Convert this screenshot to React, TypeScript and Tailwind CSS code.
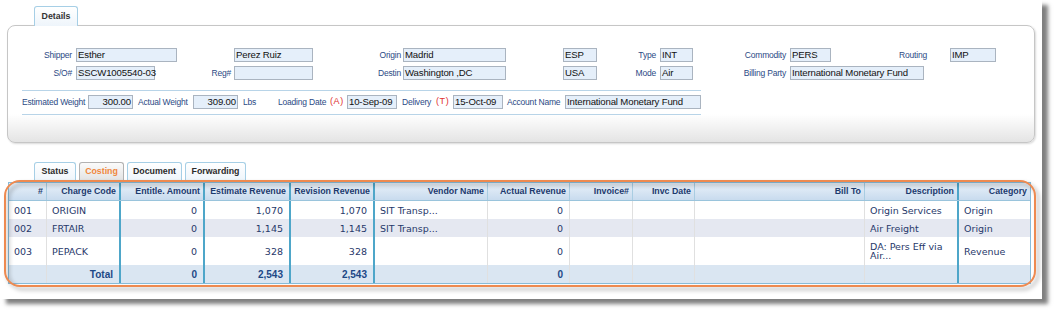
import React from 'react';

type Sep = 'none' | 'thin' | 'thick';

interface ICol {
  title: string;
  w: string;
  sep: Sep;
  align: 'left' | 'right';
}

const cols: ICol[] = [
  { title: '#', w: 'w-[37px]', sep: 'none', align: 'left' },
  { title: 'Charge Code', w: 'w-[73px]', sep: 'thin', align: 'left' },
  { title: 'Entitle. Amount', w: 'w-[84px]', sep: 'thick', align: 'right' },
  { title: 'Estimate Revenue', w: 'w-[86px]', sep: 'thick', align: 'right' },
  { title: 'Revision Revenue', w: 'w-[84px]', sep: 'thick', align: 'right' },
  { title: 'Vendor Name', w: 'w-[114px]', sep: 'thick', align: 'left' },
  { title: 'Actual Revenue', w: 'w-[82px]', sep: 'thin', align: 'right' },
  { title: 'Invoice#', w: 'w-[63px]', sep: 'thin', align: 'left' },
  { title: 'Invc Date', w: 'w-[62px]', sep: 'thin', align: 'left' },
  { title: 'Bill To', w: 'w-[170px]', sep: 'thin', align: 'left' },
  { title: 'Description', w: 'w-[93px]', sep: 'thin', align: 'left' },
  { title: 'Category', w: 'w-[73px]', sep: 'thick', align: 'left' },
];

const rows: string[][] = [
  ['001', 'ORIGIN', '0', '1,070', '1,070', 'SIT Transp...', '0', '', '', '', 'Origin Services', 'Origin'],
  ['002', 'FRTAIR', '0', '1,145', '1,145', 'SIT Transp...', '0', '', '', '', 'Air Freight', 'Origin'],
  ['003', 'PEPACK', '0', '328', '328', '', '0', '', '', '', 'DA: Pers Eff via Air...', 'Revenue'],
];

const totals = ['', 'Total', '0', '2,543', '2,543', '', '0', '', '', '', '', ''];

const rowStyles = [
  'h-[18px] bg-white',
  'h-[18px] bg-[#e5e8f1]',
  'h-[28px] bg-white',
];

const headSep = (s: Sep) =>
  s === 'thick'
    ? 'border-l-2 border-[#4ea6c9]'
    : s === 'thin'
      ? 'border-l border-[#a9cde2]'
      : '';

const bodySep = (s: Sep) =>
  s === 'thick'
    ? 'border-l-2 border-[#4ea6c9]'
    : s === 'thin'
      ? 'border-l border-[#e0e0e0]'
      : '';

const Label = ({ children, className = '' }: { children?: React.ReactNode; className?: string }) => (
  <span className={`text-[8.5px] tracking-[-0.2px] text-[#2b4a85] whitespace-nowrap ${className}`}>
    {children}
  </span>
);

const Field = ({ value = '', w, right = false }: { value?: string; w: string; right?: boolean }) => (
  <div
    className={`${w} h-[14px] shrink-0 border border-[#aab4c0] bg-[#e5effa] px-[1px] text-[9.6px] tracking-[-0.15px] leading-[12px] text-[#111] whitespace-nowrap ${
      right ? 'text-right' : ''
    }`}
  >
    {value}
  </div>
);

const Cell = ({ children, className = '' }: { children?: React.ReactNode; className?: string }) => (
  <div className={`flex h-[14px] items-center ${className}`}>{children}</div>
);

const tabs = [
  { name: 'Status', w: 'w-[42px]', active: false },
  { name: 'Costing', w: 'w-[45px]', active: true },
  { name: 'Document', w: 'w-[55px]', active: false },
  { name: 'Forwarding', w: 'w-[61px]', active: false },
];

const App = () => {
  return (
    <div className="h-[311px] w-[1055px] bg-white font-['Liberation_Sans',sans-serif]">
      <div className="flex h-[299px] w-[1042px] flex-col bg-white shadow-[6px_5px_4px_rgba(0,0,0,0.5)]">
        {/* details tab */}
        <div className="pl-[34px] pt-[6px]">
          <div className="relative z-10 -mb-px flex h-[20px] w-[44px] items-center justify-center rounded-t-[3px] border border-b-0 border-[#a6cfe6] bg-linear-to-b from-white to-[#eef5fb] text-[8.8px] font-bold text-[#333]">
            Details
          </div>
        </div>

        {/* details panel */}
        <div className="ml-[7px] h-[118px] w-[1028px] rounded-[8px] border border-[#c6c6c6] bg-linear-to-b from-white from-[76%] to-[#e4e4e4] pt-[22px] shadow-[1px_1px_2px_rgba(0,0,0,0.15)]">
          <div className="grid grid-cols-[68px_101px_57px_79px_90px_103px_57px_34px_63px_33px_97px_160px_46px] gap-y-[4px]">
            <Cell className="justify-end pr-[4px]"><Label>Shipper</Label></Cell>
            <Cell><Field w="w-[101px]" value="Esther" /></Cell>
            <Cell />
            <Cell><Field w="w-[79px]" value="Perez Ruiz" /></Cell>
            <Cell className="justify-end pr-[2px]"><Label>Origin</Label></Cell>
            <Cell><Field w="w-[103px]" value="Madrid" /></Cell>
            <Cell />
            <Cell><Field w="w-[34px]" value="ESP" /></Cell>
            <Cell className="justify-end pr-[4px]"><Label>Type</Label></Cell>
            <Cell><Field w="w-[33px]" value="INT" /></Cell>
            <Cell className="justify-end pr-[4px]"><Label>Commodity</Label></Cell>
            <Cell>
              <Field w="w-[41px]" value="PERS" />
              <Label className="ml-auto pr-[23px]">Routing</Label>
            </Cell>
            <Cell><Field w="w-[46px]" value="IMP" /></Cell>

            <Cell className="justify-end pr-[4px]"><Label>S/O#</Label></Cell>
            <Cell><Field w="w-[79px]" value="SSCW1005540-03" /></Cell>
            <Cell className="justify-end pr-[3px]"><Label>Reg#</Label></Cell>
            <Cell><Field w="w-[79px]" /></Cell>
            <Cell className="justify-end pr-[2px]"><Label>Destin</Label></Cell>
            <Cell><Field w="w-[103px]" value="Washington ,DC" /></Cell>
            <Cell />
            <Cell><Field w="w-[34px]" value="USA" /></Cell>
            <Cell className="justify-end pr-[4px]"><Label>Mode</Label></Cell>
            <Cell><Field w="w-[33px]" value="Air" /></Cell>
            <Cell className="justify-end pr-[4px]"><Label>Billing Party</Label></Cell>
            <Cell><Field w="w-[134px]" value="International Monetary Fund" /></Cell>
            <Cell />
          </div>

          <div className="ml-[14px] mt-[10px] h-px w-[679px] bg-[#b8d4e8]" />
          <div className="ml-[14px] mt-[4px] flex h-[14px] items-center">
            <Label className="w-[66px]">Estimated Weight</Label>
            <Field w="w-[45px]" value="300.00" right />
            <Label className="w-[60px] pl-[5px]">Actual Weight</Label>
            <Field w="w-[45px]" value="309.00" right />
            <Label className="w-[40px] pl-[5px]">Lbs</Label>
            <Label className="w-[52px]">Loading Date</Label>
            <span className="w-[17px] text-[9px] tracking-[0.6px] text-[#e03030]">(A)</span>
            <Field w="w-[50px]" value="10-Sep-09" />
            <Label className="w-[39px] pl-[5px]">Delivery</Label>
            <span className="w-[17px] text-[9px] tracking-[0.6px] text-[#e03030]">(T)</span>
            <Field w="w-[50px]" value="15-Oct-09" />
            <Label className="w-[62px] pl-[4px]">Account Name</Label>
            <Field w="w-[136px]" value="International Monetary Fund" />
          </div>
          <div className="ml-[14px] mt-[5px] h-px w-[679px] bg-[#b8d4e8]" />
        </div>

        {/* costing tabs */}
        <div className="mt-[19px] flex gap-[3px] pl-[34px]">
          {tabs.map((t) => (
            <div
              key={t.name}
              className={`flex h-[19px] ${t.w} items-center justify-center rounded-t-[3px] border border-b-0 text-[8.8px] font-bold ${
                t.active
                  ? 'border-[#b2b2b2] bg-linear-to-b from-[#fbfbfb] to-[#e2e2e2] text-[#f0873c]'
                  : 'border-[#a6cfe6] bg-linear-to-b from-white to-[#eef5fb] text-[#2b2b2b]'
              }`}
            >
              {t.name}
            </div>
          ))}
        </div>

        {/* costing grid */}
        <div className="relative ml-[8px] mt-[1px] w-[1023px]">
          <div className="border border-[#88bcd9]">
            <div className="flex h-[18px] border-b border-[#9ac4dc] bg-linear-to-b from-[#e9f1f9] to-[#c8dbee]">
              {cols.map((c, i) => (
                <div
                  key={i}
                  className={`${c.w} ${headSep(c.sep)} flex shrink-0 items-center justify-end pr-[3px] text-[8.8px] font-bold text-[#1c3a6e] whitespace-nowrap`}
                >
                  {c.title}
                </div>
              ))}
            </div>

            {rows.map((r, ri) => (
              <div key={ri} className={`flex ${rowStyles[ri]}`}>
                {cols.map((c, i) => (
                  <div
                    key={i}
                    className={`${c.w} ${bodySep(c.sep)} flex shrink-0 items-center font-['DejaVu_Sans',sans-serif] text-[9.5px] leading-[9px] text-[#27386a] ${
                      c.align === 'right' ? 'justify-end pr-[6px]' : 'pl-[5px] pr-[4px]'
                    }`}
                  >
                    {r[i]}
                  </div>
                ))}
              </div>
            ))}

            <div className="flex h-[18px] bg-[#dae6f2]">
              {cols.map((c, i) => (
                <div
                  key={i}
                  className={`${c.w} ${bodySep(c.sep)} flex shrink-0 items-center justify-end pr-[6px] text-[10px] font-bold text-[#1d4886]`}
                >
                  {totals[i]}
                </div>
              ))}
            </div>
          </div>

          {/* orange highlight */}
          <div className="pointer-events-none absolute left-[-4px] top-[-2px] h-[107px] w-[1032px] rounded-[16px] border-2 border-[#ee8a50] drop-shadow-[3px_3px_2px_rgba(0,0,0,0.35)]" />
        </div>
      </div>
    </div>
  );
};

export default App;
